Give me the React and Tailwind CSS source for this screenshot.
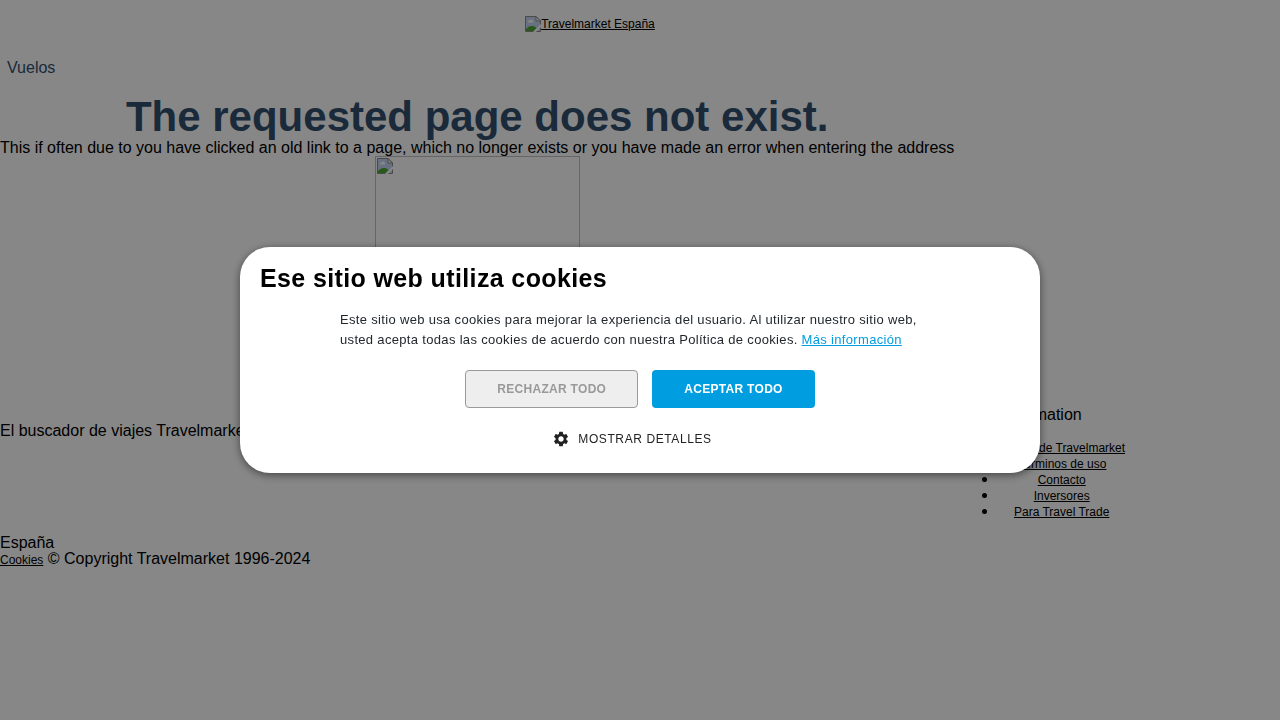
// src/App.jsx
import React from 'react';
import { MdSettings } from 'react-icons/md';

const BrokenImage = () => (
  <svg width="16" height="16" viewBox="0 0 16 16" className="shrink-0" aria-hidden="true">
    <path d="M0.5 0.5H11L15.5 5V15.5H0.5Z" fill="#c4d5f5" stroke="#8c8c8c" />
    <path d="M11 0.5V5H15.5Z" fill="#ffffff" stroke="#8c8c8c" />
    <path d="M3 6.5a1.5 1.5 0 0 1 1.3-2a1.8 1.8 0 0 1 3.3 0a1.4 1.4 0 0 1 .6 2Z" fill="#ffffff" />
    <path d="M1 15V13C3 10.500 5.500 9.500 8 10C10 10.500 11 11.500 11.500 12L8.500 15Z" fill="#4ea82e" />
    <path d="M8 16L16 8V11L11 16Z" fill="#ffffff" />
  </svg>
);

const infoLinks = [
  'Acerca de Travelmarket',
  'Términos de uso',
  'Contacto',
  'Inversores',
  'Para Travel Trade',
];

const CookieDialog = () => (
  <div className="fixed inset-0 flex items-center justify-center bg-black/47">
    <div
      role="dialog"
      aria-labelledby="cookie-title"
      className="w-full max-w-[800px] rounded-[30px] bg-white px-5 pt-[15px] pb-6 shadow-[0_2px_8px_rgba(0,0,0,0.5)]"
    >
      <h2 id="cookie-title" className="text-[25px] leading-8 font-bold tracking-[0.015em] text-black">
        Ese sitio web utiliza cookies
      </h2>
      <p className="mx-auto mt-4 max-w-[600px] text-[13px] leading-5 tracking-wide text-[#23282d]">
        Este sitio web usa cookies para mejorar la experiencia del usuario. Al utilizar nuestro sitio web,
        usted acepta todas las cookies de acuerdo con nuestra Política de cookies.{' '}
        <a href="#mas" className="text-[#009de0] underline">Más información</a>
      </p>
      <div className="mt-5 flex justify-center gap-3.5 text-xs font-bold tracking-wide">
        <button className="h-[38px] rounded border border-[#999999] bg-[#eeeeee] px-[31px] text-[#999999]">
          RECHAZAR TODO
        </button>
        <button className="h-[38px] rounded bg-[#009de0] px-8 text-white">
          ACEPTAR TODO
        </button>
      </div>
      <div className="mt-[21px] mr-4 flex justify-center">
        <button className="flex items-center gap-2 text-xs leading-5 tracking-wider text-[#222222]">
          <MdSettings size={18} />
          MOSTRAR DETALLES
        </button>
      </div>
    </div>
  </div>
);

const App = () => {
  return (
    <div className="min-h-screen bg-white font-['Liberation_Sans',Arial,sans-serif] text-base leading-4 text-black">
      {/* Logo */}
      <header className="flex max-w-[1180px] justify-center pt-4">
        <a href="#inicio" className="flex text-xs leading-4 underline">
          <BrokenImage />
          Travelmarket España
        </a>
      </header>

      <nav className="px-[7px] pt-7">
        <a href="#vuelos" className="text-[#31506f]">Vuelos</a>
      </nav>

      {/* Error message and links */}
      <div className="grid grid-cols-[max-content_max-content] gap-x-1 pt-[18px]">
        <main className="text-center">
          <h1 className="text-[42px] leading-[46px] font-bold text-[#31506f]">
            The requested page does not exist.
          </h1>
          <p>
            This if often due to you have clicked an old link to a page, which no longer exists or you have
            made an error when entering the address
          </p>
          <div className="mx-auto h-[251px] w-[205px] border border-[#c0c0c0] p-px">
            <BrokenImage />
          </div>
        </main>
        <p className="col-start-1 pt-4">El buscador de viajes Travelmarket</p>
        <section className="col-start-2 text-center">
          <h2>Information</h2>
          <ul className="mt-4 list-disc pl-10">
            {infoLinks.map((link) => (
              <li key={link}>
                <a href="#info" className="text-xs leading-3 underline">{link}</a>
              </li>
            ))}
          </ul>
        </section>
      </div>

      <footer className="pt-4">
        <p>España</p>
        <p>
          <a href="#cookies" className="text-xs leading-3 underline">Cookies</a> © Copyright Travelmarket 1996-2024
        </p>
      </footer>

      <CookieDialog />
    </div>
  );
};

export default App;
